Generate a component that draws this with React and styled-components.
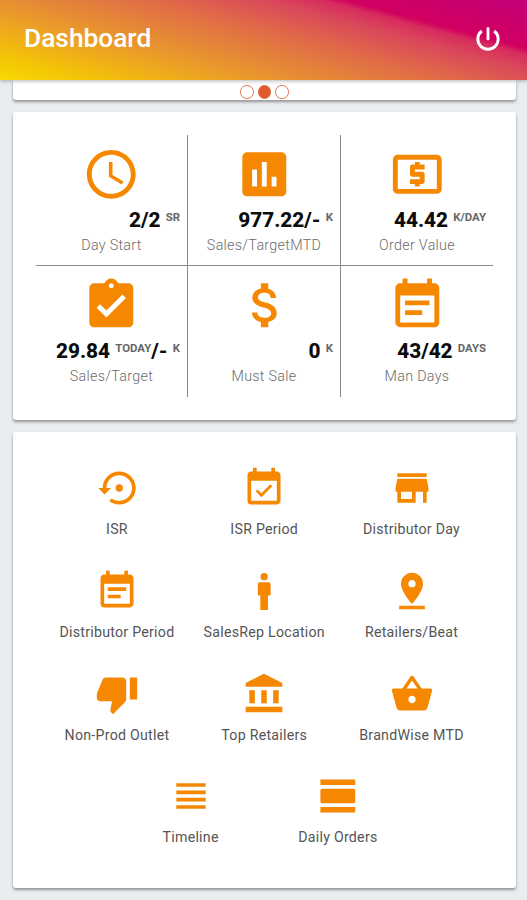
import React from "react";
import styled, { createGlobalStyle } from "styled-components";
import {
  MdAccessTime,
  MdAccountBalance,
  MdAssignmentTurnedIn,
  MdAttachMoney,
  MdEventAvailable,
  MdEventNote,
  MdInsertChart,
  MdLocalAtm,
  MdPinDrop,
  MdShoppingBasket,
  MdStore,
  MdThumbDown,
  MdViewDay,
  MdViewHeadline,
} from "react-icons/md";

const GlobalStyle = createGlobalStyle`
  * {
    box-sizing: border-box;
  }

  body {
    margin: 0;
    background: #e9edf0;
    font-family: Roboto, sans-serif;
  }
`;

// Full phone screen, cards are stacked under the header
const Screen = styled.div`
  display: flex;
  flex-direction: column;
  height: 900px;
  overflow: hidden;
`;

const Header = styled.header`
  display: flex;
  align-items: center;
  justify-content: space-between;
  flex: none;
  height: 80px;
  padding: 0 24px 4px 24px;
  color: white;
  background: linear-gradient(
    15deg,
    #f8da00 0%,
    #f4c208 12%,
    #e8942f 34%,
    #e06a48 55%,
    #da485a 68%,
    #d72c5e 75%,
    #d10060 78%,
    #c4007a 100%
  );
  box-shadow: 0 1px 4px rgba(0, 0, 0, 0.3);
  z-index: 1;
`;

const Title = styled.h1`
  margin: 0;
  font-size: 26.3px;
  font-weight: 500;
`;

const PowerButton = styled.button`
  display: flex;
  padding: 2px 0 0;
  border: none;
  background: none;
  color: white;
  font-size: 30px;
  cursor: pointer;
`;

const Content = styled.main`
  display: flex;
  flex-direction: column;
  gap: 12px;
  padding: 0 11px 0 12.5px;
`;

const Card = styled.section`
  background: white;
  border-radius: 3px;
  box-shadow: 0 2px 3px rgba(0, 0, 0, 0.38);
`;

// Bottom edge of the carousel, only the dots are visible
const CarouselCard = styled(Card)`
  display: flex;
  justify-content: center;
  gap: 4px;
  height: 19.5px;
  padding-top: 5px;
  border-radius: 0 0 3px 3px;
`;

const Dot = styled.span`
  width: 13.5px;
  height: 13.5px;
  border: 1px solid #e0704f;
  border-radius: 50%;
  background: ${(props) => (props.$active ? "#e2582f" : "white")};
`;

const MetricsCard = styled(Card)`
  height: 308.5px;
  padding: 23.5px 23.5px;
`;

const MetricsGrid = styled.div`
  display: grid;
  grid-template-columns: 152px 153px 152px;
  grid-template-rows: 131px 131px;
`;

const Metric = styled.div`
  display: flex;
  flex-direction: column;
  align-items: center;
  padding-top: 10px;
  border-right: ${(props) => (props.$lastColumn ? "none" : "1px solid #8a8a8a")};
  border-bottom: ${(props) => (props.$lastRow ? "none" : "1px solid #8a8a8a")};
`;

const MetricIcon = styled.div`
  display: flex;
  color: #f58800;
  font-size: 58.6px;
`;

const MetricValue = styled.div`
  align-self: flex-end;
  padding-right: 7px;
  line-height: 24px;
  margin-top: 4.5px;
  color: #0c0c0c;
  font-size: 20.8px;
  font-weight: 800;
  white-space: nowrap;

  sup {
    color: #666;
    font-size: 11.4px;
    font-weight: 700;
    line-height: 0;
    vertical-align: 6px;
  }
`;

const MetricLabel = styled.div`
  margin-top: 4.4px;
  color: #6c6c6c;
  font-size: 14.3px;
  font-weight: 300;
  line-height: 18px;
  letter-spacing: 0.3px;
`;

const LauncherCard = styled(Card)`
  height: 456px;
  padding-top: 34.4px;
`;

const LauncherGrid = styled.nav`
  display: flex;
  flex-wrap: wrap;
  justify-content: center;
  width: 444px;
  margin: 0 auto;
`;

const LauncherItem = styled.a`
  display: flex;
  flex-direction: column;
  align-items: center;
  gap: 10px;
  width: 147.3px;
  height: 102.6px;
  color: #555;
  font-size: 14.2px;
  line-height: 18px;
  letter-spacing: 0.25px;
  white-space: nowrap;

  svg {
    color: #f58800;
    font-size: 44px;
  }
`;

const PowerIcon = () => (
  <svg viewBox="0 0 24 24" width="1em" height="1em" fill="none" stroke="currentColor" strokeWidth="2.3">
    <path d="M12 2.7v10.2" />
    <path d="M7 5.6a8.15 8.15 0 1 0 10 0" />
  </svg>
);

// Circular arrow around a dot
const RestoreIcon = () => (
  <svg viewBox="-1.2 0 24 24" width="1em" height="1em" fill="currentColor">
    <circle cx="12" cy="12" r="2" />
    <path d="M12 3c-4.97 0-9 4.03-9 9H.6l3.4 3.6L7.6 12H5c0-3.87 3.13-7 7-7s7 3.13 7 7-3.13 7-7 7c-1.51 0-2.91-.49-4.06-1.3l-1.42 1.44C8.04 20.3 9.94 21 12 21c4.97 0 9-4.03 9-9s-4.03-9-9-9z" />
  </svg>
);

// Standing person with narrow shoulders
const ManIcon = () => (
  <svg viewBox="0 0 24 24" width="1em" height="1em" fill="currentColor">
    <circle cx="12.1" cy="4.2" r="2" />
    <path d="M9.7 7.2h4.8c.6 0 1.1.5 1.1 1.1v6.2h-1.4v7.8h-4.2v-7.8H8.6V8.3c0-.6.5-1.1 1.1-1.1z" />
  </svg>
);

const DollarIcon = () => <MdAttachMoney viewBox="-0.6 0 24 24" />;

const DayIcon = () => <MdViewDay viewBox="-0.4 0 24 24" />;

const metrics = [
  { icon: MdAccessTime, value: "2/2", unit: "SR", label: "Day Start" },
  { icon: MdInsertChart, value: "977.22/-", unit: "K", label: "Sales/TargetMTD" },
  { icon: MdLocalAtm, value: "44.42", unit: "K/DAY", label: "Order Value" },
  { icon: MdAssignmentTurnedIn, value: "29.84", period: "TODAY", target: "/-", unit: "K", label: "Sales/Target" },
  { icon: DollarIcon, value: "0", unit: "K", label: "Must Sale" },
  { icon: MdEventNote, value: "43/42", unit: "DAYS", label: "Man Days" },
];

const shortcuts = [
  { icon: RestoreIcon, label: "ISR" },
  { icon: MdEventAvailable, label: "ISR Period" },
  { icon: MdStore, label: "Distributor Day" },
  { icon: MdEventNote, label: "Distributor Period" },
  { icon: ManIcon, label: "SalesRep Location" },
  { icon: MdPinDrop, label: "Retailers/Beat" },
  { icon: MdThumbDown, label: "Non-Prod Outlet" },
  { icon: MdAccountBalance, label: "Top Retailers" },
  { icon: MdShoppingBasket, label: "BrandWise MTD" },
  { icon: MdViewHeadline, label: "Timeline" },
  { icon: DayIcon, label: "Daily Orders" },
];

const App = () => {
  return (
    <Screen>
      <GlobalStyle />
      <Header>
        <Title>Dashboard</Title>
        <PowerButton type="button">
          <PowerIcon />
        </PowerButton>
      </Header>
      <Content>
        <CarouselCard>
          <Dot />
          <Dot $active />
          <Dot />
        </CarouselCard>
        <MetricsCard>
          <MetricsGrid>
            {metrics.map(({ icon: Icon, value, period, target, unit, label }, index) => (
              <Metric key={label} $lastColumn={index % 3 === 2} $lastRow={index > 2}>
                <MetricIcon>
                  <Icon />
                </MetricIcon>
                <MetricValue>
                  {value} {period && <sup>{period}</sup>}
                  {target && `${target} `}
                  <sup>{unit}</sup>
                </MetricValue>
                <MetricLabel>{label}</MetricLabel>
              </Metric>
            ))}
          </MetricsGrid>
        </MetricsCard>
        <LauncherCard>
          <LauncherGrid>
            {shortcuts.map(({ icon: Icon, label }) => (
              <LauncherItem key={label}>
                <Icon />
                {label}
              </LauncherItem>
            ))}
          </LauncherGrid>
        </LauncherCard>
      </Content>
    </Screen>
  );
};

export default App;
